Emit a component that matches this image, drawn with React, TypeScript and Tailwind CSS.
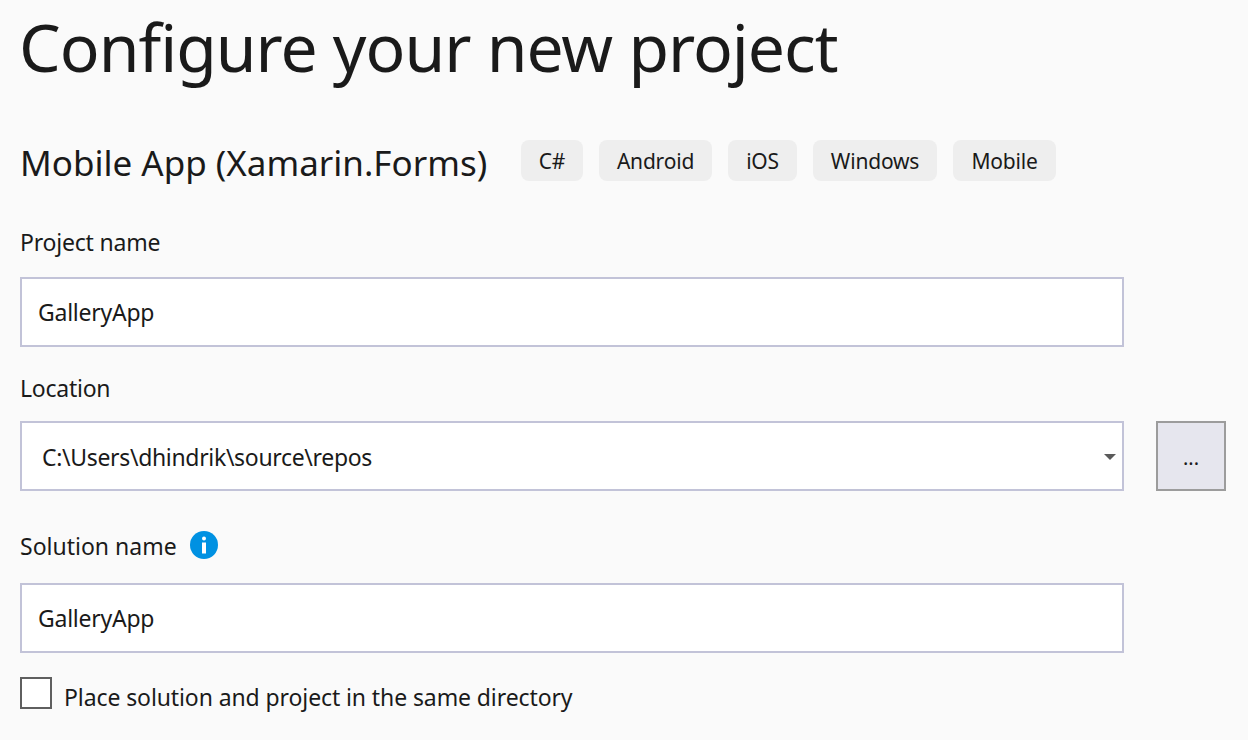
export default function App() {
  return (
    <div className="w-[1248px] h-[740px] overflow-hidden bg-[#fafafa] pl-5 text-[#1a1a1a] font-['Noto_Sans',sans-serif]">
      <h1 className="h-[100px] -ml-px text-[66px] leading-[92px] font-normal tracking-[-1px] whitespace-nowrap">Configure your new project</h1>
      <div className="mt-10 h-[41px] flex items-center">
        <div className="w-[501px] text-[35px] leading-[41px] pt-[3px] whitespace-nowrap">Mobile App (Xamarin.Forms)</div>
        <div className="flex gap-4 text-[21px] tracking-[-0.2px]">
          <span className="w-[62px] h-[41px] pt-[2px] flex items-center justify-center rounded-lg bg-[#eeeeee]">C#</span>
          <span className="w-[113px] h-[41px] pt-[2px] flex items-center justify-center rounded-lg bg-[#eeeeee]">Android</span>
          <span className="w-[69px] h-[41px] pt-[2px] flex items-center justify-center rounded-lg bg-[#eeeeee]">iOS</span>
          <span className="w-[124px] h-[41px] pt-[2px] flex items-center justify-center rounded-lg bg-[#eeeeee]">Windows</span>
          <span className="w-[103px] h-[41px] pt-[2px] flex items-center justify-center rounded-lg bg-[#eeeeee]">Mobile</span>
        </div>
      </div>
      <div className="mt-[45px] h-[51px] text-[23px] leading-[32px] tracking-[-0.2px]">Project name</div>
      <div className="w-[1104px] h-[70px] border-2 border-[#c2c3d8] bg-white pl-4 flex items-center text-[23px] tracking-[-0.25px]">GalleryApp</div>
      <div className="mt-[26px] h-[48px] text-[23px] leading-[32px] -translate-y-[1px] tracking-[-0.25px]">Location</div>
      <div className="flex gap-8">
        <div className="relative w-[1104px] h-[70px] border-2 border-[#c2c3d8] bg-white pl-5 pt-[2px] flex items-center text-[23px] tracking-[-0.33px]">
          C:\Users\dhindrik\source\repos
          <svg className="absolute right-[6px] top-[31px]" width="12" height="6" viewBox="0 0 12 6"><path d="M0 0h12L6 6z" fill="#5a5a5a" /></svg>
        </div>
        <div className="w-[70px] h-[70px] border-2 border-[#9c9c9c] bg-[#e6e6ee] pt-[4px] flex items-center justify-center text-[20px] leading-none">...</div>
      </div>
      <div className="mt-[38px] h-[54px] flex items-start gap-[13px]">
        <span className="text-[23px] leading-[32px] pt-[1px] whitespace-nowrap">Solution name</span>
        <svg className="mt-[2px]" width="28" height="28" viewBox="0 0 28 28">
          <circle cx="14" cy="14" r="14" fill="#0091e2" />
          <rect x="12" y="11.5" width="4" height="11" fill="#fff" />
          <rect x="12" y="5.5" width="4" height="4" rx="2" fill="#fff" />
        </svg>
      </div>
      <div className="w-[1104px] h-[70px] border-2 border-[#c2c3d8] bg-white pl-4 flex items-center text-[23px] tracking-[-0.25px]">GalleryApp</div>
      <div className="mt-6 flex items-start gap-3">
        <div className="w-8 h-8 border-2 border-[#5f5f5f] bg-white" />
        <span className="text-[23px] leading-[32px] pt-[4px] tracking-[-0.1px] whitespace-nowrap">Place solution and project in the same directory</span>
      </div>
    </div>
  );
}
